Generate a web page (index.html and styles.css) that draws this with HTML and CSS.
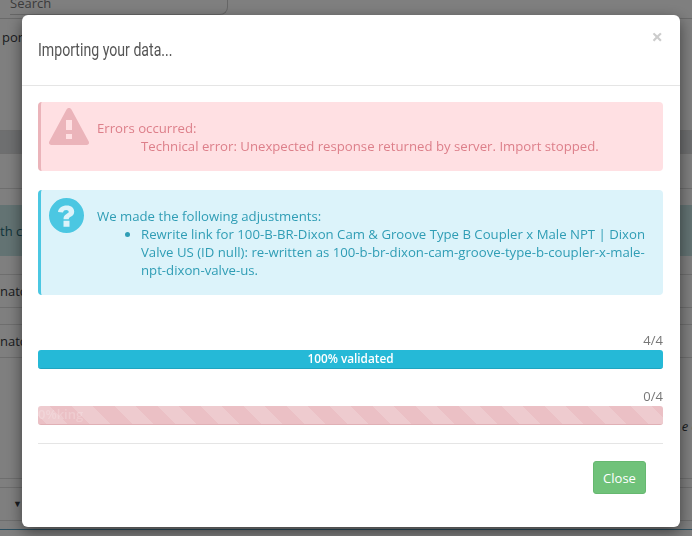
FILE: index.html
```html
<!DOCTYPE html>
<html lang="en">
<head>
    <meta charset="UTF-8">
    <meta name="viewport" content="width=device-width, initial-scale=1.0">
    <title>Importing your data</title>
    <link rel="stylesheet" href="styles.css">
</head>
<body>
    <div class="page">
        <div class="search-row"><div class="search">Search</div></div>
        <div class="row row-import">port</div>
        <div class="row row-head"></div>
        <div class="row row-sub"></div>
        <div class="row row-spacer"></div>
        <div class="row row-selected">th content</div>
        <div class="row row-gap"></div>
        <div class="row row-item">natch</div>
        <div class="row row-short"></div>
        <div class="row row-item">natch</div>
        <div class="row row-tall"><span class="row-end">e e</span></div>
        <div class="row row-thin"></div>
        <div class="row row-footer"><span class="caret">&#9660;</span></div>
        <div class="row row-blue"></div>
    </div>

    <div class="overlay"></div>

    <div class="modal">
        <div class="modal-header">
            <h4>Importing your data...</h4>
            <span class="close">&times;</span>
        </div>
        <div class="modal-body">
            <div class="alert alert-danger">
                <svg class="alert-icon" width="40" height="37" viewBox="1 0 40 37">
                    <path fill="#ebb4ba" fill-rule="evenodd" d="M21 0c1.200 0 2 .7 2.600 1.700l17 31.600c1 1.800 0 3.700-2 3.700H3.400c-2 0-3-1.900-2-3.700L18.400 1.700C19 .7 19.800 0 21 0zM18 12v10h6V12zM18 26v5h6v-5z"/>
                </svg>
                <div class="alert-text">
                    <div>Errors occurred:</div>
                    <div class="alert-detail">Technical error: Unexpected response returned by server. Import stopped.</div>
                </div>
            </div>
            <div class="alert alert-info">
                <svg class="alert-icon" width="35" height="35" viewBox="0 0 35 35">
                    <path fill="#4bc7e2" fill-rule="evenodd" d="M17.500 0a17.500 17.500 0 1 0 0 35 17.500 17.500 0 0 0 0-35zM14.500 22.700h6v6h-6zM9 14C9.500 10 13 7.500 17.800 7.500c4.700 0 7.400 2.600 7.400 6.200 0 2.800-1.700 3.900-3.500 5-1.500.9-1.900 1.300-1.900 2.600h-5.300c0-3 1-4.100 3-5.300 1.400-.9 2.200-1.200 2.200-2.200 0-1.100-1.100-1.800-2.400-1.800-1.800 0-3 .8-3.300 2.500z"/>
                </svg>
                <div class="alert-text">
                    <div>We made the following adjustments:</div>
                    <ul>
                        <li>Rewrite link for 100-B-BR-Dixon Cam &amp; Groove Type B Coupler x Male NPT | Dixon Valve US (ID null): re-written as 100-b-br-dixon-cam-groove-type-b-coupler-x-male-npt-dixon-valve-us.</li>
                    </ul>
                </div>
            </div>
            <div class="progress-group first">
                <div class="progress-count">4/4</div>
                <div class="progress progress-info">100% validated</div>
            </div>
            <div class="progress-group">
                <div class="progress-count">0/4</div>
                <div class="progress progress-striped">0%king</div>
            </div>
        </div>
        <div class="modal-footer">
            <button class="btn-close">Close</button>
        </div>
    </div>
</body>
</html>
```

FILE: styles.css
```css
* {
    box-sizing: border-box;
}
html, body {
    height: 100%;
}
body {
    margin: 0;
    font-family: "Open Sans", sans-serif;
    font-size: 13px;
    color: #363a41;
    background-color: #fff;
    overflow: hidden;
}
.page {
    height: 536px;
    overflow: hidden;
}
.search-row {
    height: 19px;
    padding-left: 10px;
    border-bottom: 1px solid #d5d5d5;
}
.search {
    width: 218px;
    height: 15px;
    line-height: 6px;
    color: #777;
    border-right: 1px solid #ccc;
    border-bottom: 1px solid #ccc;
    border-bottom-right-radius: 8px;
}
.row {
    border-bottom: 1px solid #ddd;
    white-space: nowrap;
}
.row-import {
    height: 112px;
    padding: 9px 0 0 2px;
}
.row-head {
    height: 23px;
    background-color: #dcdee0;
}
.row-sub {
    height: 35px;
}
.row-spacer {
    height: 16px;
    border-bottom: 0;
}
.row-selected {
    height: 51px;
    padding-top: 17px;
    color: #1f6a78;
    background-color: #c6e6e6;
    border-bottom: 0;
}
.row-gap {
    height: 19px;
}
.row-item {
    height: 33px;
    padding-top: 7px;
}
.row-short {
    height: 17px;
}
.row-tall {
    height: 121px;
    padding-top: 59px;
    text-align: right;
}
.row-end {
    font-style: italic;
    margin-right: -6px;
}
.row-thin {
    height: 9px;
}
.row-footer {
    height: 33px;
    padding: 9px 0 0 13px;
    font-size: 9px;
}
.row-blue {
    height: 9px;
    border-bottom: 1px solid #5a9fc0;
}
.overlay {
    position: fixed;
    top: 0;
    left: 0;
    width: 100%;
    height: 100%;
    background-color: rgba(0, 0, 0, 0.5);
}
.modal {
    position: fixed;
    top: 15px;
    left: 22px;
    width: 658px;
    height: 512px;
    background-color: #fff;
    border-radius: 6px;
    box-shadow: 0 5px 15px rgba(0, 0, 0, 0.5);
}
.modal-header {
    display: flex;
    justify-content: space-between;
    height: 71px;
    padding: 22px 16px;
    border-bottom: 1px solid #e5e5e5;
}
.modal-header h4 {
    margin: 0;
    font-family: "Roboto", sans-serif;
    font-size: 18px;
    font-weight: normal;
    line-height: 26px;
    color: #555;
    transform: scaleX(0.785);
    transform-origin: left center;
}
.close {
    margin: -13px 1px 0 0;
    font-size: 20px;
    font-weight: bold;
    line-height: 26px;
    color: #ccc;
}
.modal-body {
    padding: 16px 17px 0 16px;
}
.alert {
    display: flex;
    margin-bottom: 19px;
    padding: 6px 8px;
    font-size: 13.2px;
    line-height: 18px;
    border-left: 3px solid;
    border-radius: 4px;
}
.alert-danger {
    height: 69px;
    color: #dd7f8a;
    background-color: #ffe0e3;
    border-color: #ebb4ba;
}
.alert-info {
    height: 105px;
    color: #2f9db5;
    background-color: #dcf3fa;
    border-color: #4bc7e2;
}
.alert-icon {
    flex: none;
    margin-right: 8px;
}
.alert-info .alert-icon {
    margin: 2px 13px 0 0;
}
.alert-text {
    padding-top: 11px;
}
.alert-detail {
    padding-left: 44px;
}
.alert ul {
    margin: 0;
    padding-left: 44px;
}
.progress-group {
    margin-top: 18px;
}
.progress-group.first {
    margin-top: 36px;
}
.progress-count {
    height: 19px;
    line-height: 19px;
    text-align: right;
    color: #777;
}
.progress {
    height: 19px;
    line-height: 17px;
    font-size: 11.8px;
    font-weight: 600;
    text-align: center;
    color: #fff;
    border-radius: 3px;
}
.progress-info {
    background-color: #25b9d7;
    border-bottom: 1px solid #1fa5c0;
}
.progress-striped {
    overflow: hidden;
    font-size: 13px;
    text-align: left;
    color: rgba(255, 255, 255, 0.2);
    background-color: #ebc0c5;
    background-image: repeating-linear-gradient(45deg, #ebc0c5 0, #ebc0c5 6px, #eecbcf 6px, #eecbcf 21.2px, #ebc0c5 21.2px, #ebc0c5 30.4px);
    border-bottom: 1px solid #e0b0b5;
}
.modal-footer {
    display: flex;
    justify-content: flex-end;
    margin: 18px 17px 0 16px;
    padding: 17px 17px 0 0;
    border-top: 1px solid #e5e5e5;
}
.btn-close {
    width: 53px;
    height: 33px;
    padding: 0;
    font-family: "Open Sans", sans-serif;
    font-size: 13px;
    color: #fff;
    background-color: #70c27a;
    border: 1px solid #66b870;
    border-radius: 3px;
}
```
